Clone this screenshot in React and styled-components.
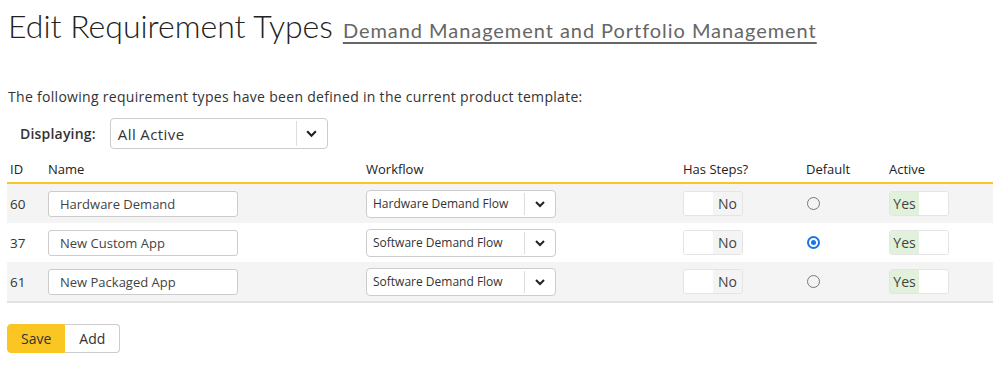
import React from 'react'
import styled, { createGlobalStyle } from 'styled-components'

const Global = createGlobalStyle`
  body {
    margin: 0;
    background: #fff;
    font-family: "Open Sans", "Noto Sans", sans-serif;
    color: #333;
  }
`

const Page = styled.div`
  padding: 6px 7px 0 7px;
  width: 986px;
`

const TitleRow = styled.div`
  display: flex;
  align-items: baseline;
  gap: 10px;
  height: 48px;
`

const Title = styled.h1`
  margin: 0;
  font-family: "Lato", sans-serif;
  font-weight: 300;
  font-size: 32px;
  color: #222;
  padding-left: 1px;
`

const SubLink = styled.a`
  font-family: "Lato", sans-serif;
  font-size: 20px;
  color: #666;
  text-decoration: underline;
  text-underline-offset: 4px;
  letter-spacing: 0.95px;
`

const Intro = styled.p`
  margin: 33px 0 0 1px;
  font-size: 14px;
  letter-spacing: 0.3px;
  color: #333;
`

const FilterRow = styled.div`
  display: flex;
  align-items: center;
  gap: 14px;
  margin: 12px 0 0 13px;
`

const Label = styled.span`
  font-size: 14px;
  font-weight: 600;
  letter-spacing: 0.2px;
  color: #333;
`

const Select = styled.div`
  display: flex;
  align-items: stretch;
  width: ${p => p.width}px;
  height: ${p => p.height}px;
  border: 1px solid #ccc;
  border-radius: 4px;
  background: #fff;
  box-sizing: border-box;
  font-size: ${p => p.size}px;
  letter-spacing: ${p => p.spacing || 0}px;
  color: #333;
`

const SelectText = styled.div`
  flex: 1;
  display: flex;
  align-items: center;
  padding-left: ${p => p.pad}px;
  border-right: 1px solid #ddd;
  margin: 2px 0;
`

const Caret = styled.div`
  width: 30px;
  display: flex;
  align-items: center;
  justify-content: center;
`

const Table = styled.div`
  margin-top: 7px;
`

const HeadRow = styled.div`
  display: grid;
  grid-template-columns: 38px 318px 317px 123px 83px 1fr;
  height: 26px;
  align-items: center;
  border-bottom: 2px solid #f9c623;
  font-size: 13px;
  font-weight: 500;
  color: #222;
  padding-left: 3px;
`

const Row = styled.div`
  display: grid;
  grid-template-columns: 38px 318px 317px 123px 83px 1fr;
  height: 39px;
  align-items: center;
  background: ${p => (p.shade ? '#f4f4f4' : '#fff')};
  border-bottom: ${p => (p.last ? '2px solid #e3e3e3' : 'none')};
  font-size: 13.5px;
  padding-left: 3px;
`

const Input = styled.div`
  width: 190px;
  height: 26px;
  box-sizing: border-box;
  border: 1px solid #ccc;
  border-radius: 3px;
  background: #fff;
  display: flex;
  align-items: center;
  padding-left: 11px;
  font-size: 13px;
  color: #444;
`

const Toggle = styled.div`
  display: flex;
  width: 60px;
  height: 25px;
  border: 1px solid #e4e4e4;
  border-radius: 3px;
  box-sizing: border-box;
  overflow: hidden;
  font-size: 14px;
  color: #444;
`

const Half = styled.div`
  width: 50%;
  display: flex;
  align-items: center;
  justify-content: center;
  background: ${p => p.bg};
`

const Radio = styled.div`
  width: 13px;
  height: 13px;
  border-radius: 50%;
  box-sizing: border-box;
  margin-left: 1px;
  border: ${p => (p.on ? '2px solid #1a73e8' : '1px solid #777')};
  display: flex;
  align-items: center;
  justify-content: center;
  &::after {
    content: '';
    display: ${p => (p.on ? 'block' : 'none')};
    width: 5px;
    height: 5px;
    border-radius: 50%;
    background: #1a73e8;
  }
`

const Buttons = styled.div`
  display: flex;
  margin-top: 21px;
`

const Button = styled.button`
  height: 29px;
  padding: 0 ${p => p.pad}px;
  font-family: inherit;
  font-size: 14px;
  color: #333;
  border: 1px solid ${p => (p.primary ? '#f9c623' : '#ccc')};
  background: ${p => (p.primary ? '#f9c623' : '#fff')};
  border-radius: ${p => (p.primary ? '4px 0 0 4px' : '0 4px 4px 0')};
  border-left: ${p => (p.primary ? '' : 'none')};
`

const Chevron = ({ size = 12 }) => (
  <svg width={size} height={size} viewBox="0 0 12 12">
    <path d="M2 4l4 4 4-4" fill="none" stroke="#222" strokeWidth="2" />
  </svg>
)

const rows = [
  { id: 60, name: 'Hardware Demand', flow: 'Hardware Demand Flow', def: false },
  { id: 37, name: 'New Custom App', flow: 'Software Demand Flow', def: true },
  { id: 61, name: 'New Packaged App', flow: 'Software Demand Flow', def: false },
]

export default function App() {
  return (
    <Page>
      <Global />
      <TitleRow>
        <Title>Edit Requirement Types</Title>
        <SubLink>Demand Management and Portfolio Management</SubLink>
      </TitleRow>
      <Intro>The following requirement types have been defined in the current product template:</Intro>
      <FilterRow>
        <Label>Displaying:</Label>
        <Select width={218} height={31} size={15} spacing={0.4}>
          <SelectText pad={7}>All Active</SelectText>
          <Caret><Chevron size={13} /></Caret>
        </Select>
      </FilterRow>
      <Table>
        <HeadRow>
          <span>ID</span>
          <span>Name</span>
          <span>Workflow</span>
          <span>Has Steps?</span>
          <span>Default</span>
          <span>Active</span>
        </HeadRow>
        {rows.map((r, i) => (
          <Row key={r.id} shade={i % 2 === 0} last={i === rows.length - 1}>
            <span>{r.id}</span>
            <Input>{r.name}</Input>
            <Select width={190} height={28} size={12}>
              <SelectText pad={6}>{r.flow}</SelectText>
              <Caret><Chevron /></Caret>
            </Select>
            <Toggle>
              <Half bg="#fff" />
              <Half bg="#f4f4f4">No</Half>
            </Toggle>
            <Radio on={r.def} />
            <Toggle>
              <Half bg="#e2f1dc">Yes</Half>
              <Half bg="#fff" />
            </Toggle>
          </Row>
        ))}
      </Table>
      <Buttons>
        <Button primary pad={13}>Save</Button>
        <Button pad={14}>Add</Button>
      </Buttons>
    </Page>
  )
}
